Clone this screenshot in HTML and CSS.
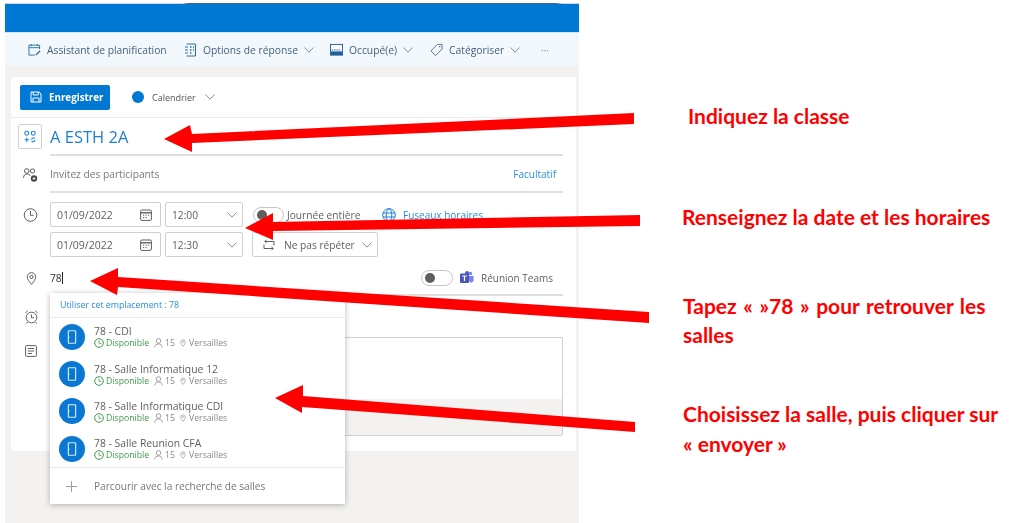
FILE: index.html
```html
<!DOCTYPE html>
<html lang="fr">
<head>
<meta charset="utf-8">
<title>Nouvel événement</title>
<link rel="stylesheet" href="styles.css">
</head>
<body>
<svg width="0" height="0" class="defs">
  <defs>
    <symbol id="chev" viewBox="0 0 10 6"><path d="M.5.5 5 5.2 9.5.5" fill="none" stroke="currentColor"/></symbol>
    <symbol id="cal" viewBox="0 0 12 12"><rect x=".6" y="1" width="10.8" height="10.4" rx="1.2" fill="none" stroke="currentColor"/><path d="M.6 3.8h10.8" stroke="currentColor" stroke-width="1.4"/><path d="M3 6.2h1.2M5.5 6.2h1.2M8 6.2h1.2M3 8.6h1.2M5.5 8.6h1.2" stroke="currentColor"/></symbol>
    <symbol id="door" viewBox="0 0 25 25"><circle cx="12.5" cy="12.5" r="12.5" fill="#0a78d2"/><rect x="9" y="6.5" width="7" height="12" rx=".5" fill="none" stroke="#d8ecfb" stroke-width="1.1"/><path d="M9.500 12v1.500" stroke="#d8ecfb"/></symbol>
    <symbol id="clock" viewBox="0 0 10 10"><circle cx="5" cy="5" r="4.3" fill="none" stroke="#3f9b4b"/><path d="M5 2.5V5.3H7.4" fill="none" stroke="#3f9b4b" stroke-width=".8"/></symbol>
    <symbol id="person" viewBox="0 0 9 10"><circle cx="4.5" cy="3" r="2.3" fill="none" stroke="#8a8886" stroke-width=".8"/><path d="M.6 9.5C1 7 2.500 6 4.500 6S8 7 8.400 9.500" fill="none" stroke="#8a8886" stroke-width=".8"/></symbol>
    <symbol id="pin" viewBox="0 0 8 10"><path d="M4 9.500C2 7 1 5.500 1 3.800a3 3 0 0 1 6 0C7 5.500 6 7 4 9.500Z" fill="none" stroke="#8a8886" stroke-width=".8"/><circle cx="4" cy="3.800" r="1" fill="#8a8886"/></symbol>
  </defs>
</svg>

<main class="page">
  <section class="app">
    <div class="cutoff"></div>
    <div class="brandbar"></div>
    <nav class="commands">
      <span class="cmd cmd-plan">
        <svg class="cmd-icon" viewBox="0 0 14 14"><path d="M12.500 6V1.800H1v10.700h6.500M1 4.500h11.500M3.500.6v2.400M10 .6v2.400" fill="none" stroke="#2f6fa8"/><path d="M8.500 12.500l4.500-4.800" stroke="#2f6fa8" stroke-width="1.500"/></svg>
        Assistant de planification
      </span>
      <span class="cmd cmd-reply">
        <svg class="cmd-icon" viewBox="0 0 13 14"><path d="M2.500 1h9v12h-9M1 4h3M1 7h3M1 10h3" fill="none" stroke="#2f6fa8"/><path d="M6 4h1.500M9 4h1M6 7h1.500M9 7h1M6 10h1.500" stroke="#2f6fa8" stroke-width="1.300"/></svg>
        Options de réponse
        <svg class="chev"><use href="#chev"/></svg>
      </span>
      <span class="cmd cmd-busy">
        <svg class="cmd-icon" viewBox="0 0 14 13"><rect x=".5" y=".5" width="13" height="11.500" fill="#fff" stroke="#1f5f9c"/><rect x="1" y="8" width="12" height="4" fill="#1f5f9c"/><path d="M2 6.500h10" stroke="#6c95bb" stroke-dasharray="1 1" stroke-width="2"/></svg>
        Occupé(e)
        <svg class="chev"><use href="#chev"/></svg>
      </span>
      <span class="cmd cmd-cat">
        <svg class="cmd-icon" viewBox="0 0 14 14"><path d="M8 1h5v5l-7 7-5-5Z" fill="none" stroke="#4f6f8f"/><circle cx="10.500" cy="3.500" r=".8" fill="#4f6f8f"/></svg>
        Catégoriser
        <svg class="chev"><use href="#chev"/></svg>
      </span>
      <span class="more">···</span>
    </nav>

    <div class="canvas">
      <form class="card">
        <div class="card-top">
          <span class="save">
            <svg class="save-icon" viewBox="0 0 12 12"><path d="M1 1h8l2 2v8H1Z" fill="none" stroke="#fff"/><path d="M3.200 1v3h5V1M3 11V7h6v4" fill="none" stroke="#fff"/></svg>
            Enregistrer
          </span>
          <span class="dot"></span>
          <span class="calname">Calendrier</span>
          <svg class="chev"><use href="#chev"/></svg>
        </div>

        <div class="row row-title">
          <span class="rail"><span class="cat-box">
            <svg viewBox="0 0 12 12" class="cat-svg"><circle cx="3" cy="3" r="1.800" fill="none" stroke="#1b87dc"/><circle cx="9" cy="3" r="1.800" fill="none" stroke="#1b87dc"/><path d="M1 9h4M3 7v4M7.500 9a1.800 1.800 0 0 1 3-1.400M10.500 9a1.800 1.800 0 0 1-3 1.400" fill="none" stroke="#1b87dc"/></svg>
          </span></span>
          <div class="field field-title">A ESTH 2A</div>
        </div>

        <div class="row row-invite">
          <span class="rail">
            <svg class="rail-icon" viewBox="0 0 15 14"><circle cx="3.800" cy="3" r="2.300" fill="none" stroke="#605e5c"/><circle cx="9.500" cy="3" r="2.100" fill="none" stroke="#605e5c"/><path d="M.6 10c0-3 1.500-4 3.200-4s3 .6 3.500 2" fill="none" stroke="#605e5c"/><circle cx="11" cy="10.500" r="3.200" fill="#4a4948"/><path d="M9.500 10.500h3M11 9v3" stroke="#fff" stroke-width=".8"/></svg>
          </span>
          <div class="field field-invite">
            <span>Invitez des participants</span>
            <span class="link">Facultatif</span>
          </div>
        </div>

        <div class="row row-dates">
          <span class="rail">
            <svg class="rail-icon" viewBox="0 0 14 14"><circle cx="7" cy="7" r="6.300" fill="none" stroke="#605e5c"/><path d="M7 3v4.300h3" fill="none" stroke="#605e5c"/></svg>
          </span>
          <div class="date-grid">
            <div class="line">
              <span class="box box-date">01/09/2022<svg class="cal"><use href="#cal"/></svg></span>
              <span class="box box-time">12:00<svg class="chev"><use href="#chev"/></svg></span>
              <span class="toggle toggle-day"><i></i></span>
              <span class="allday">Journée entière</span>
              <svg class="globe" viewBox="0 0 14 14"><circle cx="7" cy="7" r="6.300" fill="none" stroke="#1b7fd0"/><ellipse cx="7" cy="7" rx="2.800" ry="6.300" fill="none" stroke="#1b7fd0"/><path d="M1 5h12M1 9h12" stroke="#1b7fd0"/></svg>
              <span class="link">Fuseaux horaires</span>
            </div>
            <div class="line">
              <span class="box box-date">01/09/2022<svg class="cal"><use href="#cal"/></svg></span>
              <span class="box box-time">12:30<svg class="chev"><use href="#chev"/></svg></span>
              <span class="box box-repeat">
                <svg class="repeat" viewBox="0 0 14 12"><path d="M3 2.500h9v4M11 9.500H2v-4M4.500.8 2.800 2.500 4.500 4.200M9.500 7.800l1.700 1.700-1.700 1.700" fill="none" stroke="#605e5c"/></svg>
                Ne pas répéter<svg class="chev"><use href="#chev"/></svg>
              </span>
            </div>
          </div>
        </div>

        <div class="row row-place">
          <span class="rail">
            <svg class="rail-icon pin-icon" viewBox="0 0 10 13"><path d="M5 12.300C2.500 9.300.8 7.400.8 4.900a4.200 4.200 0 0 1 8.400 0C9.200 7.400 7.500 9.300 5 12.300Z" fill="none" stroke="#605e5c"/><circle cx="5" cy="4.900" r="1.600" fill="none" stroke="#605e5c"/></svg>
          </span>
          <div class="field field-place">
            <span class="typed">78</span>
            <span class="toggle toggle-teams"><i></i></span>
            <svg class="teams" viewBox="0 0 14 13"><circle cx="10.500" cy="2.500" r="1.800" fill="#7b83eb"/><path d="M8 5h5.500v4.500a2.500 2.500 0 0 1-4 1.500Z" fill="#7b83eb"/><circle cx="7" cy="2" r="2" fill="#5059c9"/><rect y="2.500" width="9" height="9.500" rx="1" fill="#4b53bc"/><path d="M2.200 5h4.600M4.500 5v5" stroke="#fff" stroke-width="1.200"/></svg>
            <span class="teams-label">Réunion Teams</span>
          </div>
        </div>

        <div class="row row-remind">
          <span class="rail">
            <svg class="rail-icon" viewBox="0 0 14 14"><circle cx="7" cy="7.500" r="5.300" fill="none" stroke="#605e5c"/><path d="M7 4.500v3.300h2.500M.8 3 3.300.8M13.200 3 10.700.8M3 12l-1 1.500M11 12l1 1.500" fill="none" stroke="#605e5c"/></svg>
          </span>
        </div>

        <div class="row row-notes">
          <span class="rail">
            <svg class="rail-icon notes-icon" viewBox="0 0 12 12"><rect x=".6" y=".6" width="10.800" height="10.800" rx="1" fill="none" stroke="#605e5c"/><path d="M2.800 3.500h6.400M2.800 6h6.400M2.800 8.500h4" stroke="#605e5c"/></svg>
          </span>
          <div class="notes"><div class="notes-foot"></div></div>
        </div>

        <div class="menu">
          <div class="menu-head">Utiliser cet emplacement : 78</div>
          <div class="menu-list">
            <div class="room">
              <svg class="door"><use href="#door"/></svg>
              <div class="room-text"><div class="room-name">78 - CDI</div>
              <div class="room-meta"><svg class="m-clock"><use href="#clock"/></svg><span class="free">Disponible</span><svg class="m-person"><use href="#person"/></svg><span>15</span><svg class="m-pin"><use href="#pin"/></svg><span>Versailles</span></div></div>
            </div>
            <div class="room">
              <svg class="door"><use href="#door"/></svg>
              <div class="room-text"><div class="room-name">78 - Salle Informatique 12</div>
              <div class="room-meta"><svg class="m-clock"><use href="#clock"/></svg><span class="free">Disponible</span><svg class="m-person"><use href="#person"/></svg><span>15</span><svg class="m-pin"><use href="#pin"/></svg><span>Versailles</span></div></div>
            </div>
            <div class="room">
              <svg class="door"><use href="#door"/></svg>
              <div class="room-text"><div class="room-name">78 - Salle Informatique CDI</div>
              <div class="room-meta"><svg class="m-clock"><use href="#clock"/></svg><span class="free">Disponible</span><svg class="m-person"><use href="#person"/></svg><span>15</span><svg class="m-pin"><use href="#pin"/></svg><span>Versailles</span></div></div>
            </div>
            <div class="room">
              <svg class="door"><use href="#door"/></svg>
              <div class="room-text"><div class="room-name">78 - Salle Reunion CFA</div>
              <div class="room-meta"><svg class="m-clock"><use href="#clock"/></svg><span class="free">Disponible</span><svg class="m-person"><use href="#person"/></svg><span>15</span><svg class="m-pin"><use href="#pin"/></svg><span>Versailles</span></div></div>
            </div>
          </div>
          <div class="menu-foot">
            <svg class="plus" viewBox="0 0 11 11"><path d="M5.500 0v11M0 5.500h11" stroke="#a19f9d"/></svg>
            Parcourir avec la recherche de salles
          </div>
        </div>
      </form>
    </div>
  </section>

  <aside class="notes-col">
    <p class="tip tip-1">Indiquez la classe</p>
    <p class="tip tip-2">Renseignez la date et les horaires</p>
    <p class="tip tip-3">Tapez « »78 » pour retrouver les<br>salles</p>
    <p class="tip tip-4">Choisissez la salle, puis cliquer sur<br>« envoyer »</p>
  </aside>

  <svg class="arrows" viewBox="0 0 1024 523" width="1024" height="523">
    <polygon points="634,113 634,124 192,143 192,152 164,139 190,125 192,134"/>
    <polygon points="640,215 640,226 273,231 273,240 245,228 273,213 273,222"/>
    <polygon points="649,312 649,323 118,287 117,295 90,281 118,268 118,277"/>
    <polygon points="635,422 635,432 302,407 302,413 275,398 303,385 303,396"/>
  </svg>
</main>
</body>
</html>
```
FILE: styles.css
```css
* { box-sizing: border-box; }
html, body { margin: 0; padding: 0; background: #fff; }
body { width: 1024px; height: 523px; overflow: hidden; font-family: "Open Sans", "Noto Sans", sans-serif; color: #605e5c; }
.defs { position: absolute; }
.page { position: relative; display: flex; width: 1024px; height: 523px; }

/* Application window */
.app { width: 574px; margin-left: 5px; margin-top: 3px; display: flex; flex-direction: column; filter: blur(.4px); }
.cutoff { height: 1px; background: linear-gradient(90deg, #cfd6dc 0, #cfd6dc 31%, #46617c 32%, #46617c 96%, #cfd6dc 97%); }
.brandbar { height: 28px; background: #0078d4; }
.commands { height: 34px; background: #f3f8fd; display: flex; align-items: center; padding-left: 23px; font-size: 10.3px; color: #44617e; border-top: 1px solid #cfe4f7; white-space: nowrap; }
.cmd { display: flex; align-items: center; }
.cmd-icon { width: 13px; height: 14px; margin-right: 6px; flex: none; }
.chev { width: 10px; height: 6px; flex: none; color: #8a8f96; margin-left: 6px; }
.cmd-plan { width: 156px; }
.cmd-reply { width: 146px; }
.cmd-busy { width: 100px; }
.cmd-cat { width: 111px; }
.more { color: #8a8f96; font-size: 10px; }
.canvas { flex: 1; background: #f3f2f1; padding: 11px 3px 0 6px; }

/* Card */
.card { position: relative; height: 374px; background: #fff; border-radius: 2px; padding: 0 13px 0 7px; margin: 0; }
.card-top { height: 41px; margin: 0 -13px 0 -7px; padding: 0 0 0 9px; border-bottom: 1px solid #edebe9; display: flex; align-items: center; }
.save { width: 90px; height: 25px; background: #0078d4; border-radius: 2px; color: #fff; font-weight: 700; font-size: 9.8px; display: flex; align-items: center; padding-left: 10px; }
.save-icon { width: 12px; height: 12px; margin-right: 7px; }
.dot { width: 12px; height: 12px; border-radius: 50%; background: #0078d4; margin-left: 22px; }
.calname { font-size: 9px; margin-left: 8px; color: #555; width: 43px; }
.card-top .chev { margin-left: 10px; }

.row { display: flex; }
.rail { width: 32px; flex: none; display: flex; align-items: center; padding-left: 5px; }
.rail-icon { width: 15px; height: 14px; }
.field { flex: 1; display: flex; align-items: center; border-bottom: 2px solid #e1dfdd; font-size: 10px; }

.row-title { height: 38px; }
.row-title .rail { padding: 6px 0 0 0; align-items: flex-start; }
.cat-box { width: 24px; height: 25px; border: 1px solid #d2d0ce; border-radius: 2px; display: flex; align-items: center; justify-content: center; background: #fff; }
.cat-svg { width: 14px; height: 13px; }
.field-title { color: #1b7fd4; font-size: 16.5px; padding-top: 1px; }

.row-invite { height: 37px; }
.field-invite { justify-content: space-between; color: #7b7977; padding-right: 7px; font-size: 10.2px; }
.link { color: #2a8ee0; font-size: 10px; }

.row-dates { height: 65px; padding-top: 9px; }
.row-dates .rail { align-items: flex-start; padding-top: 6px; }
.date-grid { display: flex; flex-direction: column; gap: 5px; }
.line { display: flex; align-items: center; height: 25px; }
.box { height: 25px; border: 1px solid #d2d0ce; border-radius: 2px; display: flex; align-items: center; font-size: 10.2px; color: #605e5c; background: #fff; white-space: nowrap; }
.box-date { width: 111px; padding-left: 6px; justify-content: space-between; padding-right: 8px; font-size: 10.5px; }
.cal { width: 12px; height: 12px; color: #605e5c; }
.box-time { width: 78px; margin-left: 4px; padding-left: 6px; justify-content: space-between; padding-right: 5px; }
.toggle { display: flex; align-items: center; width: 31px; height: 16px; border: 1px solid #c8c6c4; border-radius: 8px; padding-left: 3px; flex: none; background: #fff; }
.toggle i { width: 10px; height: 10px; border-radius: 50%; background: #605e5c; display: block; }
.toggle-day { margin-left: 10px; }
.allday { font-size: 10.2px; margin-left: 3px; width: 95px; white-space: nowrap; color: #605e5c; }
.globe { width: 14px; height: 14px; margin-right: 7px; flex: none; }
.line .link { white-space: nowrap; }
.box-repeat { width: 126px; margin-left: 9px; padding-left: 9px; }
.repeat { width: 14px; height: 12px; margin-right: 8px; flex: none; }
.box-repeat .chev { margin-left: 7px; }

.row-place { height: 38px; }
.row-place .rail { padding-top: 3px; }
.pin-icon { width: 11px; height: 13px; margin-left: 3px; }
.field-place { font-size: 10.2px; color: #323130; padding-top: 3px; }
.typed { width: 371px; }
.typed::after { content: ""; display: inline-block; width: 1px; height: 12px; background: #222; vertical-align: -2px; }
.toggle-teams { width: 32px; }
.teams { width: 14px; height: 13px; margin-left: 7px; flex: none; }
.teams-label { margin-left: 7px; color: #605e5c; white-space: nowrap; font-size: 10px; }

.row-remind { height: 41px; }
.row-remind .rail { align-items: flex-start; padding-top: 14px; padding-left: 6px; }
.row-notes { height: 99px; }
.row-notes .rail { align-items: flex-start; padding-top: 8px; padding-left: 7px; }
.notes-icon { width: 12px; height: 12px; }
.notes { flex: 1; border: 1px solid #d2d0ce; border-radius: 2px; display: flex; flex-direction: column; justify-content: flex-end; overflow: hidden; }
.notes-foot { height: 36px; background: #f3f2f1; }

/* Room menu */
.menu { position: absolute; left: 39px; top: 216px; width: 295px; height: 211px; background: #fff; box-shadow: 0 1px 6px rgba(0,0,0,.28); display: flex; flex-direction: column; }
.menu-head { height: 25px; flex: none; display: flex; align-items: center; padding-left: 10px; color: #2a8ee0; font-size: 8.8px; border-bottom: 1px solid #edebe9; }
.menu-list { height: 150px; flex: none; display: flex; flex-direction: column; border-bottom: 1px solid #edebe9; }
.room { height: 37.4px; flex: none; display: flex; align-items: center; padding-left: 9px; }
.door { width: 26px; height: 26px; margin-right: 9px; flex: none; }
.room-text { padding-top: 1px; }
.room-name { font-size: 10.4px; line-height: 12px; color: #605e5c; white-space: nowrap; }
.room-meta { display: flex; align-items: center; font-size: 8.7px; line-height: 12px; color: #8a8886; }
.free { color: #3f9b4b; margin-right: 5px; }
.m-clock { width: 10px; height: 10px; margin-right: 2px; }
.m-person { width: 9px; height: 10px; margin-right: 2px; }
.m-pin { width: 6px; height: 10px; margin: 0 3px 0 5px; }
.menu-foot { flex: 1; display: flex; align-items: center; padding-left: 16px; color: #797775; font-size: 10.1px; }
.plus { width: 11px; height: 11px; margin-right: 17px; }

/* Callouts */
.notes-col { margin-left: 103px; flex: 1; font-family: Lato, "Open Sans", sans-serif; font-weight: 700; color: #f00; font-size: 21px; line-height: 29px; display: flex; flex-direction: column; white-space: nowrap; }
.tip { margin: 0; }
.tip-1 { margin: 101px 0 0 6px; }
.tip-2 { margin: 72px 0 0 0; }
.tip-3 { margin: 60px 0 0 1px; word-spacing: 1.5px; }
.tip-4 { margin: 50px 0 0 1px; line-height: 30px; }
.arrows { position: absolute; left: 0; top: 0; pointer-events: none; }
.arrows polygon { fill: #f00; }
```
